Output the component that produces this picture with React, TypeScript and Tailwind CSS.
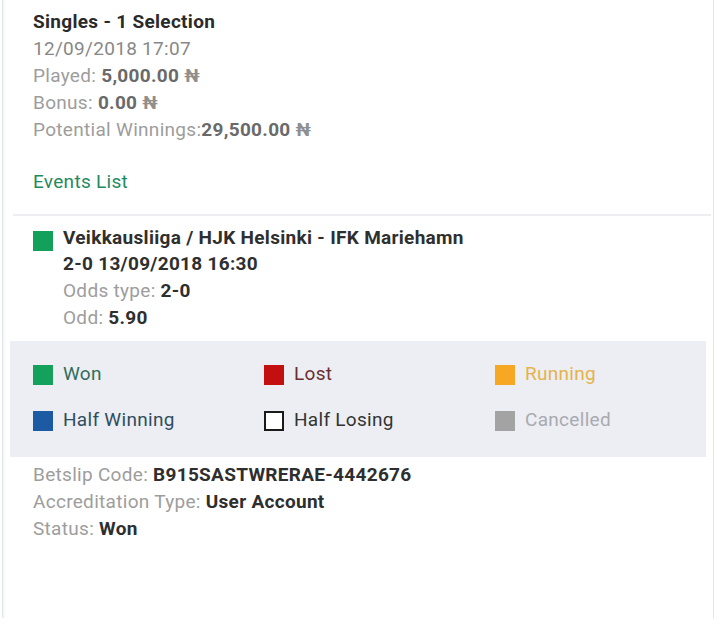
import React from "react";

const Label = ({ l, v, vc = "text-[#2e2e2e]", cur }: { l: string; v: string; vc?: string; cur?: boolean }) => (
  <div className="h-[27px] leading-[27px] whitespace-nowrap">
    <span className="text-[#9d9d9d]">{l}</span>
    <span className={`font-bold ${vc}`}>{v}</span>
    {cur && <span className="font-bold text-[#8f8f8f]"> ₦</span>}
  </div>
);

const Legend = ({
  box,
  text,
  label,
}: {
  box: string;
  text: string;
  label: string;
}) => (
  <div className="flex items-center h-[27px]">
    <span className={`w-[20px] h-[20px] mr-[10px] ${box}`} />
    <span className={text}>{label}</span>
  </div>
);

export default function App() {
  return (
    <div className="w-[720px] h-[628px] bg-white font-['Roboto',sans-serif] text-[19px] tracking-[0.3px] overflow-hidden">
      <div className="ml-[2px] w-[712px] h-[618px] border-l border-r border-[#e3e6eb] bg-white shadow-[inset_3px_0_3px_-2px_#eef1f4]">
        <div className="pl-[30px] pt-[8px]">
          <div className="h-[27px] leading-[27px] font-bold text-[#2a2a2a]">Singles - 1 Selection</div>
          <div className="h-[27px] leading-[27px] text-[#888888]">12/09/2018 17:07</div>
          <Label l="Played: " v="5,000.00" vc="text-[#6a6a6a]" cur />
          <Label l="Bonus: " v="0.00" vc="text-[#6a6a6a]" cur />
          <Label l="Potential Winnings:" v="29,500.00" vc="text-[#6a6a6a]" cur />
          <div className="h-[27px] leading-[27px] mt-[25px] text-[#1f8a62]">Events List</div>
        </div>
        <div className="mt-[19px] ml-[10px] mr-[2px] h-[2px] bg-[#eceef1]" />
        <div className="pl-[30px] pt-[8px] flex">
          <span className="w-[20px] h-[20px] mt-[7px] bg-[#12a05a] mr-[10px] shrink-0" />
          <div>
            <div className="h-[27px] leading-[27px] font-bold text-[#2f2f2f]">Veikkausliiga / HJK Helsinki - IFK Mariehamn</div>
            <div className="h-[26px] leading-[26px] font-bold text-[#2f2f2f]">2-0 13/09/2018 16:30</div>
            <Label l="Odds type: " v="2-0" />
            <Label l="Odd: " v="5.90" />
          </div>
        </div>
        <div className="mt-[10px] mx-[7px] h-[116px] bg-[#eceef3] pl-[23px] pt-[20px] grid grid-cols-[231px_231px_1fr] content-start gap-y-[19px]">
          <Legend box="bg-[#13a15b]" text="text-[#2f6e5c]" label="Won" />
          <Legend box="bg-[#c30f0f]" text="text-[#6a2e2e]" label="Lost" />
          <Legend box="bg-[#f6a825]" text="text-[#e6b24a]" label="Running" />
          <Legend box="bg-[#1c5aa3]" text="text-[#2f4d5e]" label="Half Winning" />
          <Legend box="bg-white border-2 border-[#1a1a1a]" text="text-[#333333]" label="Half Losing" />
          <Legend box="bg-[#a3a3a3]" text="text-[#a9aab0]" label="Cancelled" />
        </div>
        <div className="pl-[30px] pt-[4px]">
          <Label l="Betslip Code: " v="B915SASTWRERAE-4442676" />
          <Label l="Accreditation Type: " v="User Account" />
          <Label l="Status: " v="Won" />
        </div>
      </div>
    </div>
  );
}
